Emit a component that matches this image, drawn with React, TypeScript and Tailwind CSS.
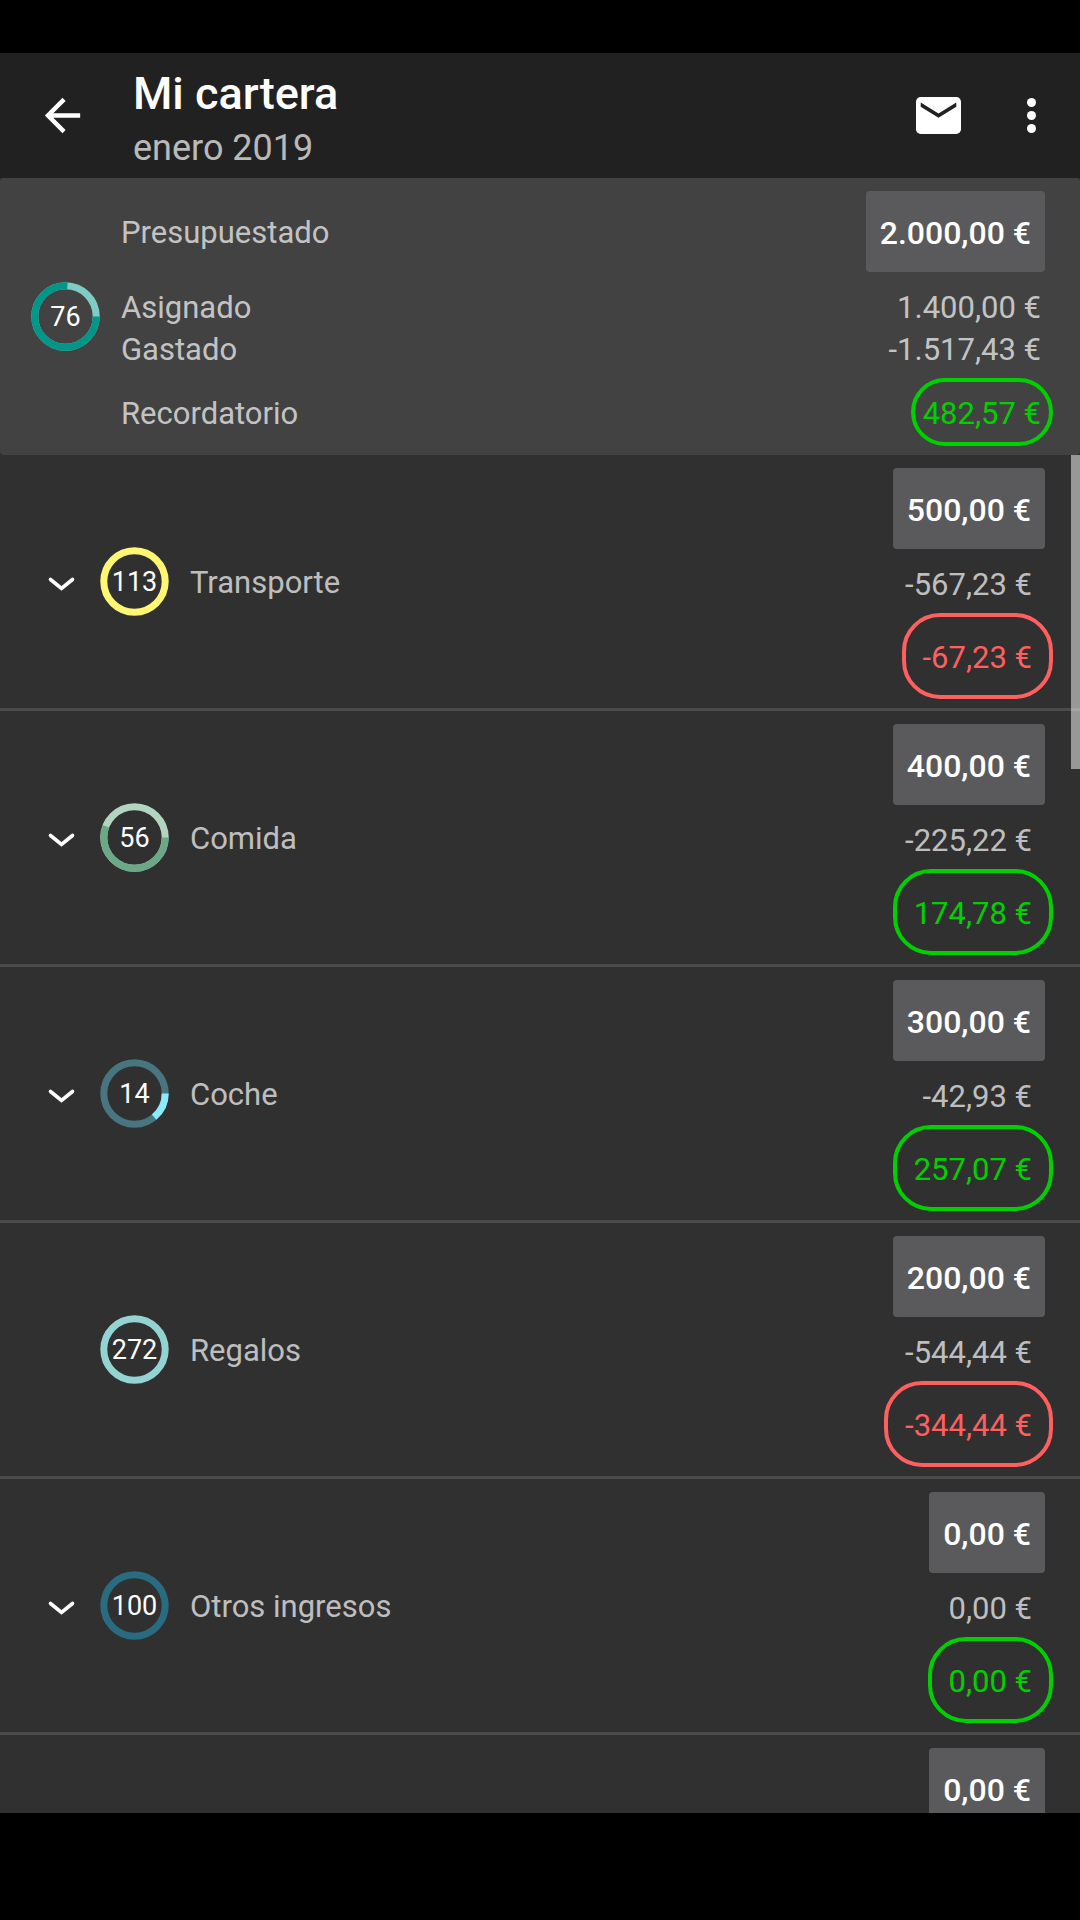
type Tone = 'green' | 'red';

interface Category {
  name: string;
  expandable: boolean;
  percent: number;
  fill: string;
  track: string;
  budget: string;
  spent: string;
  rest: string;
  tone: Tone;
}

const categories: Category[] = [
  { name: 'Transporte', expandable: true, percent: 113, fill: '#fff774', track: '#fff774', budget: '500,00 €', spent: '-567,23 €', rest: '-67,23 €', tone: 'red' },
  { name: 'Comida', expandable: true, percent: 56, fill: '#6ba886', track: '#b4d4c2', budget: '400,00 €', spent: '-225,22 €', rest: '174,78 €', tone: 'green' },
  { name: 'Coche', expandable: true, percent: 14, fill: '#8ceaff', track: '#48757f', budget: '300,00 €', spent: '-42,93 €', rest: '257,07 €', tone: 'green' },
  { name: 'Regalos', expandable: false, percent: 272, fill: '#93d4d3', track: '#93d4d3', budget: '200,00 €', spent: '-544,44 €', rest: '-344,44 €', tone: 'red' },
  { name: 'Otros ingresos', expandable: true, percent: 100, fill: '#296b81', track: '#296b81', budget: '0,00 €', spent: '0,00 €', rest: '0,00 €', tone: 'green' },
];

const toneClass: Record<Tone, string> = {
  green: 'border-[#00d000] text-[#00d000]',
  red: 'border-[#ff5f5f] text-[#ff5f5f]',
};

function ProgressRing({ percent, fill, track }: { percent: number; fill: string; track: string }) {
  return (
    <div className="relative flex size-[69px] shrink-0 items-center justify-center">
      <svg viewBox="0 0 69 69" className="absolute inset-0 size-full" aria-hidden="true">
        <circle cx="34.5" cy="34.5" r="30.7" fill="none" stroke={track} strokeWidth="7" />
        {percent < 100 && (
          <circle cx="34.5" cy="34.5" r="30.7" fill="none" stroke={fill} strokeWidth="7" pathLength="100" strokeDasharray={`${percent} 100`} />
        )}
      </svg>
      <span className="relative text-[27px] leading-8 text-white">{percent}</span>
    </div>
  );
}

function BudgetButton({ amount }: { amount: string }) {
  return (
    <button type="button" className="mr-2 h-[81px] shrink-0 rounded bg-[#5a5a5c] px-3.5 pt-0.5 text-[32px] font-medium text-white">
      {amount}
    </button>
  );
}

function CategoryRow({ item }: { item: Category }) {
  return (
    <li className="flex h-64 shrink-0 items-center border-b-[3px] border-[#4b4b4b] pr-[27px] pl-9">
      <div className="flex w-16 shrink-0">
        {item.expandable && (
          <button type="button" aria-label={`Desplegar ${item.name}`} className="flex size-[50px] items-center justify-center">
            <svg viewBox="0 0 50 50" className="size-full" fill="none" stroke="#fff" strokeWidth="3.6" strokeLinecap="round" strokeLinejoin="miter" aria-hidden="true">
              <path d="M14.5 22.5 L25.5 31.5 L36.5 22.5" />
            </svg>
          </button>
        )}
      </div>
      <ProgressRing percent={item.percent} fill={item.fill} track={item.track} />
      <span className="flex-1 pt-0.5 pl-[21px] text-white/70">{item.name}</span>
      <div className="flex flex-col items-end pt-1">
        <BudgetButton amount={item.budget} />
        <span className="flex h-16 items-center pt-2 pr-[21px] text-white/70">{item.spent}</span>
        <span className={`flex h-[86px] items-center rounded-[38px] border-4 px-[17px] pt-1 ${toneClass[item.tone]}`}>{item.rest}</span>
      </div>
    </li>
  );
}

export default function App() {
  return (
    <div className="flex h-screen flex-col bg-black pt-[53px] pb-[107px] font-['Roboto',sans-serif] text-[31px] leading-[42px]">
      <header className="flex h-[125px] shrink-0 items-center bg-[#212121] pr-5 pl-9">
        <button type="button" aria-label="Volver" className="shrink-0">
          <svg viewBox="0 0 24 24" className="size-[53px]" fill="#fff" aria-hidden="true">
            <path d="M20 11H7.83l5.59-5.59L12 4l-8 8 8 8 1.41-1.41L7.83 13H20v-2z" />
          </svg>
        </button>
        <div className="flex-1 pt-2 pl-11">
          <h1 className="text-[45px] leading-[56px] font-medium text-white">Mi cartera</h1>
          <p className="text-[36px] leading-[52px] text-white/70">enero 2019</p>
        </div>
        <button type="button" aria-label="Enviar por correo" className="mr-[46px] shrink-0">
          <svg viewBox="0 0 134 110" className="h-[37px] w-[45px]" aria-hidden="true">
            <rect width="134" height="110" rx="14" fill="#fff" />
            <path d="M14 16 L67 49 L120 16 V29 L67 62 L14 29 Z" fill="#212121" />
          </svg>
        </button>
        <button type="button" aria-label="Más opciones" className="shrink-0">
          <svg viewBox="0 0 53 53" className="size-[53px]" fill="#fff" aria-hidden="true">
            <circle cx="24.5" cy="13.5" r="4.5" />
            <circle cx="24.5" cy="26.5" r="4.5" />
            <circle cx="24.5" cy="39.5" r="4.5" />
          </svg>
        </button>
      </header>

      <main className="relative flex min-h-0 flex-1 flex-col bg-[#303030]">
        <section className="flex h-[277px] shrink-0 items-center rounded bg-[#424242] pr-[27px] pl-[31px]">
          <ProgressRing percent={76} fill="#009688" track="#80cbc4" />
          <dl className="flex-1 pt-1 pl-[21px] text-white/70">
            <div className="flex items-center justify-between">
              <dt className="pt-0.5">Presupuestado</dt>
              <dd className="flex">
                <BudgetButton amount="2.000,00 €" />
              </dd>
            </div>
            <div className="flex justify-between pt-[15px] pr-3">
              <dt>Asignado</dt>
              <dd>1.400,00 €</dd>
            </div>
            <div className="flex justify-between pr-3 pb-[7px]">
              <dt>Gastado</dt>
              <dd>-1.517,43 €</dd>
            </div>
            <div className="flex items-center justify-between">
              <dt className="pt-1">Recordatorio</dt>
              <dd className="flex h-[68px] items-center rounded-[34px] border-4 border-[#00d000] px-2 pt-1 text-[#00d000]">482,57 €</dd>
            </div>
          </dl>
        </section>

        <div className="relative min-h-0 flex-1 overflow-hidden">
          <ul className="flex flex-col">
            {categories.map((item) => (
              <CategoryRow key={item.name} item={item} />
            ))}
            <li className="flex justify-end pt-[13px] pr-[27px]">
              <BudgetButton amount="0,00 €" />
            </li>
          </ul>
          <div className="absolute top-0 right-0 h-[314px] w-[9px] bg-white/50" />
        </div>
      </main>
    </div>
  );
}
